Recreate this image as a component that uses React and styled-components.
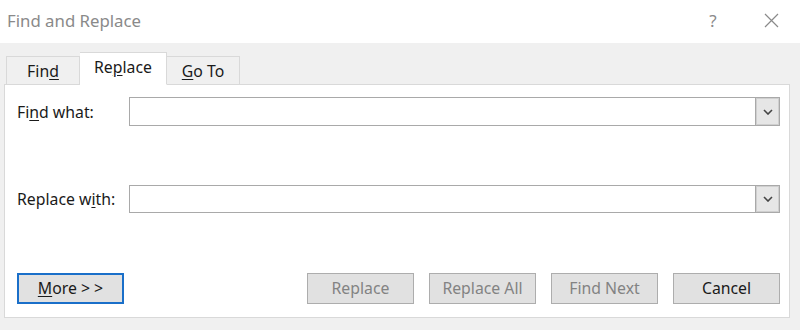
import React from 'react';
import styled, { createGlobalStyle } from 'styled-components';

const GlobalStyle = createGlobalStyle`
    html, body {
        margin: 0;
        padding: 0;
        background: #f0f0f0;
    }
    body {
        font-family: "Noto Sans", "Open Sans", sans-serif;
        font-size: 15.8px;
        color: #1a1a1a;
    }
`

const Window = styled.div`
    width: 800px;
    height: 330px;
    display: flex;
    flex-direction: column;
    background: #f0f0f0;
    overflow: hidden;
`
const TitleBar = styled.div`
    height: 43px;
    flex-shrink: 0;
    background: #fff;
    display: flex;
    align-items: center;
    padding: 0 0 2px 7px;
    box-sizing: border-box;
`
const Title = styled.span`
    flex: 1;
    color: #8a8a8a;
    font-size: 16.8px;
`
const TitleButton = styled.span`
    width: 58px;
    display: flex;
    justify-content: center;
    color: #8a8a8a;
    font-size: 17px;
`
const Body = styled.div`
    flex: 1;
    display: flex;
    flex-direction: column;
    padding: 10px 10px 12px 4px;
`
const TabRow = styled.div`
    display: flex;
    align-items: flex-end;
    height: 32px;
    padding-left: 2px;
    position: relative;
    z-index: 1;
    margin-bottom: -1px;
`
const Tab = styled.div`
    width: ${p => p.$w}px;
    height: ${p => (p.$active ? 33 : 29)}px;
    box-sizing: border-box;
    display: flex;
    align-items: center;
    justify-content: center;
    padding-bottom: ${p => (p.$active ? 4 : 0)}px;
    background: ${p => (p.$active ? '#fff' : '#f0f0f0')};
    border: 1px solid #d9d9d9;
    border-bottom: ${p => (p.$active ? '1px solid #fff' : '1px solid #d9d9d9')};
    border-left: ${p => (p.$noLeft ? 'none' : '1px solid #d9d9d9')};
`
const Panel = styled.div`
    flex: 1;
    background: #fff;
    border: 1px solid #d9d9d9;
    display: flex;
    flex-direction: column;
    padding: 12px 9px 13px 12px;
`
const FieldRow = styled.div`
    display: flex;
    align-items: center;
    margin-bottom: ${p => p.$gap || 0}px;
`
const Label = styled.label`
    width: 112px;
    flex-shrink: 0;
`
const Combo = styled.div`
    flex: 1;
    height: ${p => p.$h}px;
    display: flex;
    border: 1px solid #a9a9a9;
    box-sizing: border-box;
    background: #fff;
`
const ComboInput = styled.div`
    flex: 1;
`
const ComboButton = styled.div`
    width: 23px;
    border-left: 1px solid #a9a9a9;
    background: #e6e6e6;
    display: flex;
    align-items: center;
    justify-content: center;
    box-shadow: inset 0 0 0 1px #cfcfcf;
`
const ButtonRow = styled.div`
    display: flex;
    gap: 15px;
    margin-top: auto;
`
const Button = styled.div`
    width: 107px;
    height: 31px;
    box-sizing: border-box;
    display: flex;
    align-items: center;
    justify-content: center;
    padding-bottom: 2px;
    background: #e1e1e1;
    border: ${p => (p.$focus ? '2px solid #1a6fc9' : '1px solid #adadad')};
    color: ${p => (p.$disabled ? '#838383' : '#1a1a1a')};
    margin-left: ${p => (p.$push ? 'auto' : '0')};
`
const U = styled.span`
    text-decoration: underline;
    text-underline-offset: 2px;
`

const Chevron = () => (
    <svg width="10" height="6" viewBox="0 0 10 6">
        <path d="M1 1l4 4 4-4" fill="none" stroke="#444" strokeWidth="1.6" />
    </svg>
);

const Close = () => (
    <svg width="15" height="15" viewBox="0 0 15 15">
        <path d="M1 1l13 13M14 1L1 14" stroke="#8a8a8a" strokeWidth="1.2" />
    </svg>
);

export default function App() {
    return (
        <Window>
            <GlobalStyle />
            <TitleBar>
                <Title>Find and Replace</Title>
                <TitleButton>?</TitleButton>
                <TitleButton><Close /></TitleButton>
            </TitleBar>
            <Body>
                <TabRow>
                    <Tab $w={74}>Fin<U>d</U></Tab>
                    <Tab $w={87} $active $noLeft>Re<U>p</U>lace</Tab>
                    <Tab $w={73} $noLeft><U>G</U>o To</Tab>
                </TabRow>
                <Panel>
                    <FieldRow $gap={59}>
                        <Label>Fi<U>n</U>d what:</Label>
                        <Combo $h={29}>
                            <ComboInput />
                            <ComboButton><Chevron /></ComboButton>
                        </Combo>
                    </FieldRow>
                    <FieldRow>
                        <Label>Replace w<U>i</U>th:</Label>
                        <Combo $h={28}>
                            <ComboInput />
                            <ComboButton><Chevron /></ComboButton>
                        </Combo>
                    </FieldRow>
                    <ButtonRow>
                        <Button $focus><U>M</U>ore &gt; &gt;</Button>
                        <Button $push $disabled>Replace</Button>
                        <Button $disabled>Replace All</Button>
                        <Button $disabled>Find Next</Button>
                        <Button>Cancel</Button>
                    </ButtonRow>
                </Panel>
            </Body>
        </Window>
    );
}
